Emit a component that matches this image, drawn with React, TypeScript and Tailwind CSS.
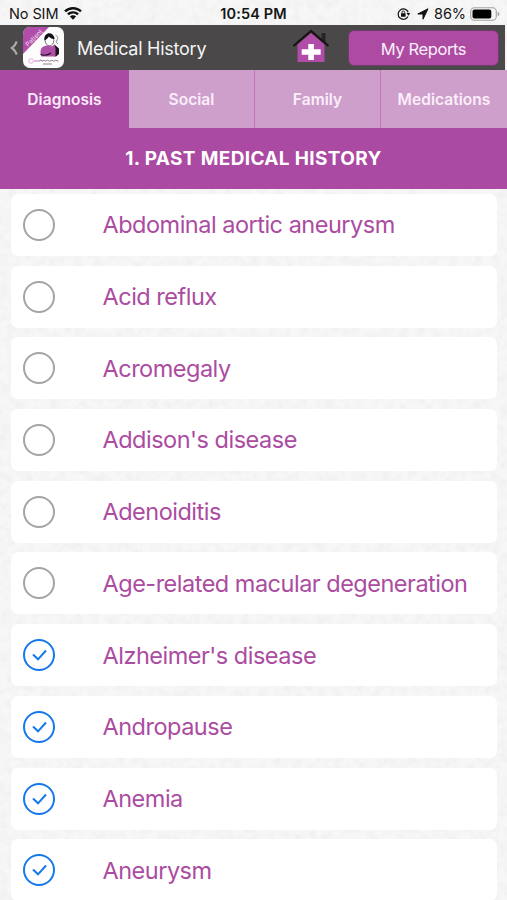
import React from "react";

type Condition = {
  name: string;
  checked: boolean;
};

const tabs = ["Diagnosis", "Social", "Family", "Medications"];

const conditions: Condition[] = [
  { name: "Abdominal aortic aneurysm", checked: false },
  { name: "Acid reflux", checked: false },
  { name: "Acromegaly", checked: false },
  { name: "Addison's disease", checked: false },
  { name: "Adenoiditis", checked: false },
  { name: "Age-related macular degeneration", checked: false },
  { name: "Alzheimer's disease", checked: true },
  { name: "Andropause", checked: true },
  { name: "Anemia", checked: true },
  { name: "Aneurysm", checked: true },
];

// Faint paper grain behind the status bar and the list
function PaperTexture() {
  return (
    <svg className="absolute inset-0 h-full w-full">
      <filter id="paper">
        <feTurbulence type="fractalNoise" baseFrequency="0.12" numOctaves="3" seed="4" />
        <feColorMatrix values="0 0 0 0 0.5  0 0 0 0 0.5  0 0 0 0 0.5  0.25 0 0 0 -0.09" />
      </filter>
      <rect width="100%" height="100%" filter="url(#paper)" />
    </svg>
  );
}

function WifiIcon() {
  return (
    <svg viewBox="0 0 18 13" className="ml-[6px] h-[13px] w-[18px]" fill="#111">
      <path d="M9 0C5.6 0 2.500 1.300.2 3.500l1.700 1.800A10.200 10.200 0 0 1 9 2.500c2.700 0 5.200 1 7.100 2.800l1.700-1.800A12.700 12.700 0 0 0 9 0z" />
      <path d="M9 4.200c-2.300 0-4.300.9-5.900 2.300l1.700 1.800A6.200 6.200 0 0 1 9 6.600c1.600 0 3.100.6 4.200 1.700l1.700-1.800A8.700 8.700 0 0 0 9 4.200z" />
      <path d="M9 8.300c-1.200 0-2.300.5-3.100 1.200L9 12.700l3.100-3.200A4.600 4.600 0 0 0 9 8.300z" />
    </svg>
  );
}

function RotationLockIcon() {
  return (
    <svg viewBox="0 0 14 12" className="h-3 w-[14px]" fill="none" stroke="#111">
      <path d="M11.200 4.200A5.200 5.200 0 1 0 11 8.500" strokeWidth="1.200" />
      <path d="M9.500 5h3.800l-1.900 2.700z" fill="#111" stroke="none" />
      <rect x="4" y="5.300" width="4.600" height="3.500" rx=".5" fill="#111" stroke="none" />
      <path d="M5 5.500V4.300a1.300 1.300 0 0 1 2.600 0v1.200" strokeWidth=".9" />
    </svg>
  );
}

function BatteryIcon() {
  return (
    <svg viewBox="0 0 30 14" className="ml-1 h-[14px] w-[30px]">
      <rect x=".7" y=".7" width="25.600" height="12.600" rx="3.800" fill="none" stroke="#a3a3a3" strokeWidth="1.100" />
      <rect x="2.500" y="2.500" width="18.800" height="9" rx="2" fill="#000" />
      <path d="M27.600 4.700c1.200.4 1.800 1.300 1.800 2.300s-.6 1.900-1.800 2.300z" fill="#a3a3a3" />
    </svg>
  );
}

function StatusBar() {
  return (
    <div className="grid h-[25px] shrink-0 grid-cols-3 items-center pt-[2px] text-[14.5px] leading-none text-[#151515]">
      <div className="flex items-center pl-[9px]">
        <span className="pt-px tracking-[-0.1px]">No SIM</span>
        <WifiIcon />
      </div>
      <div className="pt-px text-center font-semibold tracking-[0.15px]">10:54 PM</div>
      <div className="flex items-center justify-end pr-[7px]">
        <RotationLockIcon />
        <svg viewBox="0 0 12 12" className="ml-[6px] h-3 w-3" fill="#111" stroke="#111" strokeLinejoin="round">
          <path d="M11 .8.800 6h5.200v5.200z" />
        </svg>
        <span className="ml-[5px] pt-px tracking-[-0.1px]">86%</span>
        <BatteryIcon />
      </div>
    </div>
  );
}

function AppLogo() {
  return (
    <svg viewBox="0 0 41 41" className="h-[41px] w-[41px] shrink-0">
      <defs>
        <clipPath id="logo">
          <rect width="41" height="41" rx="7" />
        </clipPath>
      </defs>
      <g clipPath="url(#logo)">
        <rect width="41" height="41" fill="#fdfdfd" />
        <path d="M0 0h26L0 27z" fill="#b04da8" />
        <text
          x="5"
          y="20"
          transform="rotate(-45 5 20)"
          fontSize="6.500"
          fill="#f3dcf1"
          className="font-['Inter']"
        >
          Patient
        </text>
        <path d="M31.500 17.500l4.500 4v5.500l-3 2.500-5-1z" fill="#1c151c" />
        <path d="M18.500 21c2-2 4.500-2.500 7-2.500 2 1.500 4 1 6-1l1 4v8H18.500c-1.500-2.500-1.300-6 0-8.500z" fill="#ae4fa8" />
        <ellipse cx="26.500" cy="13.500" rx="4.300" ry="5.300" fill="#fff" stroke="#222" strokeWidth=".6" />
        <path d="M21.300 13.500c-.8-9 9.500-9.500 10.400-1.500-3 .2-4.600-1-5.800-2.400-1 1.900-2.300 3-4.600 3.900z" fill="#16121a" />
        <path d="M17.500 27.500c4 1.500 7 1 10.500-1.500" fill="none" stroke="#1c151c" strokeWidth="1.200" />
        <path d="M32.500 8c2 1 3 3 1.500 5s-.5 3 1 4" fill="none" stroke="#888" strokeWidth="1" />
        <circle cx="8" cy="34" r="2.300" fill="none" stroke="#dfa5dc" strokeWidth=".9" />
        <path d="M11 34h5" stroke="#dfa5dc" strokeWidth="1.500" />
        <path d="M16 34.200l2-1.400 1 1.400 2-1 1.500 1 2-1 2 1 2.500-1 1.500 1 2-1 3 1M20 37h9" fill="none" stroke="#8a708a" strokeWidth=".9" />
      </g>
    </svg>
  );
}

function HomeIcon() {
  return (
    <svg viewBox="0 0 38 34" className="mb-[3px] h-[34px] w-[38px] shrink-0">
      <path d="M29.500 4h4v10l-4-4z" fill="#262426" />
      <path d="M5.500 15.500 19 4l13.500 11.500V33h-27z" fill="#b04da8" />
      <path d="M1.500 17 19 2l17.500 15" fill="none" stroke="#171317" strokeWidth="2.300" />
      <path d="M16.300 15h5.600v5.200h6.800v5.600h-6.800v5.200h-5.600v-5.200H9.700v-5.600h6.600z" fill="#fff" />
    </svg>
  );
}

function Header() {
  return (
    <header className="mr-[2px] flex h-[45px] shrink-0 items-center bg-[#4a4848]">
      <svg viewBox="0 0 8 14" className="ml-[10px] h-[14px] w-2" fill="none" stroke="#aaa" strokeWidth="2.200">
        <path d="M6.800.5C5.500 3.500 4 5.500 2 7c2 1.500 3.500 3.500 4.800 6.500" />
      </svg>
      <div className="ml-[5px]">
        <AppLogo />
      </div>
      <h1 className="ml-[13px] w-[215px] pt-[2px] text-[18px] tracking-[-0.25px] text-[#f4f4f4]">Medical History</h1>
      <HomeIcon />
      <button className="ml-auto mr-[6px] mt-px h-[36px] w-[151px] rounded-md border border-[#713a6c] bg-[#ad4ba3] pt-[2px] text-[16.5px] tracking-[-0.4px] text-[#faeefa]">
        My Reports
      </button>
    </header>
  );
}

function ConditionRow({ name, checked }: Condition) {
  return (
    <li className="flex h-[62px] shrink-0 items-center rounded-[7px] bg-white pl-3">
      <svg
        viewBox="0 0 32 32"
        className={checked ? "h-8 w-8 text-[#1679eb]" : "h-8 w-8 text-[#a4a4a4]"}
        fill="none"
        stroke="currentColor"
        strokeWidth="2"
      >
        <circle cx="16" cy="16" r="15" />
        {checked && <path d="m10 15.500 5 4.800 8-8.800" />}
      </svg>
      <span className="ml-[47.5px] whitespace-nowrap text-[23.5px] tracking-[-0.5px] text-[#ab4ca1]">{name}</span>
    </li>
  );
}

export default function App() {
  return (
    <div className="relative h-[900px] w-[507px] overflow-hidden bg-[#f7f7f7] font-['Inter',sans-serif]">
      <PaperTexture />
      <div className="relative flex h-full flex-col">
        <StatusBar />
        <Header />
        <nav className="grid h-[58px] shrink-0 grid-cols-[129px_126px_126px_126px] bg-[#ab4aa2]">
          {tabs.map((tab, i) => (
            <button
              key={tab}
              className={
                i === 0
                  ? "bg-[#ab4aa2] pb-px pt-[3px] text-[15.5px] font-semibold tracking-[0.05px] text-[#fbe9fa]"
                  : "border-r border-[#bf78b9] bg-[#cf9fcb] pb-px pt-[3px] text-[15.5px] font-semibold tracking-[0.05px] text-[#fbeefb] last:border-r-0"
              }
            >
              {tab}
            </button>
          ))}
        </nav>
        <h2 className="flex h-[61px] shrink-0 items-center justify-center bg-[#ab4aa2] pt-px text-[19px] font-bold tracking-[0.35px] text-white">
          1. PAST MEDICAL HISTORY
        </h2>
        <ul className="flex flex-col gap-[9.7px] pl-[11px] pr-[10px] pt-[5px]">
          {conditions.map((condition) => (
            <ConditionRow key={condition.name} {...condition} />
          ))}
        </ul>
      </div>
    </div>
  );
}
